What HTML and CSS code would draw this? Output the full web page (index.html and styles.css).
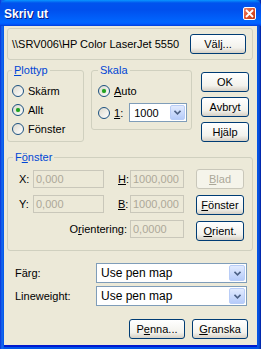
FILE: index.html
```html
<!DOCTYPE html>
<html lang="sv">
<head>
    <meta charset="UTF-8">
    <title>Skriv ut</title>
    <link rel="stylesheet" href="styles.css">
</head>
<body>

<div class="window">
    <div class="titlebar">
        <span class="title">Skriv ut</span>
        <span class="close">
            <svg width="9" height="9" viewBox="0 0 9 9"><path d="M1 1L8 8M8 1L1 8" stroke="#fff" stroke-width="1.8"/></svg>
        </span>
    </div>

    <div class="client">
        <div class="printer-box">
            <span>\\SRV006\HP Color LaserJet 5550</span>
            <div class="btn btn-wide">Väl<u>j</u>...</div>
        </div>

        <div class="row-top">
            <fieldset class="plottyp">
                <legend><u>P</u>lottyp</legend>
                <div class="radio"><span class="dot"></span>Skärm</div>
                <div class="radio"><span class="dot on"></span>Allt</div>
                <div class="radio"><span class="dot"></span>Fönster</div>
            </fieldset>

            <fieldset class="skala">
                <legend>Skala</legend>
                <div class="radio"><span class="dot on"></span><u>A</u>uto</div>
                <div class="radio scale-row">
                    <span class="dot"></span><u>1</u>:
                    <div class="combo combo-small"><span>1000</span><span class="arrow"><svg width="7" height="5" viewBox="0 0 7 5"><path d="M0.5 0.8L3.5 3.8L6.5 0.8" stroke="#4d6185" stroke-width="1.6" fill="none"/></svg></span></div>
                </div>
            </fieldset>

            <div class="side-buttons">
                <div class="btn">OK</div>
                <div class="btn">Avbryt</div>
                <div class="btn">Hjälp</div>
            </div>
        </div>

        <fieldset class="fonster">
            <legend>F<u>ö</u>nster</legend>
            <div class="win-grid">
                <div class="coords">
                    <div class="coord-row">
                        <span class="lbl-x">X:</span>
                        <span class="field field-x">0,000</span>
                        <span class="lbl-h"><u>H</u>:</span>
                        <span class="field field-h">1000,000</span>
                    </div>
                    <div class="coord-row">
                        <span class="lbl-x">Y:</span>
                        <span class="field field-x">0,000</span>
                        <span class="lbl-h"><u>B</u>:</span>
                        <span class="field field-h">1000,000</span>
                    </div>
                    <div class="coord-row orient-row">
                        <span>O<u>r</u>ientering:</span>
                        <span class="field field-h">0,0000</span>
                    </div>
                </div>
                <div class="win-buttons">
                    <div class="btn disabled"><u>B</u>lad</div>
                    <div class="btn"><u>F</u>önster</div>
                    <div class="btn"><u>O</u>rient.</div>
                </div>
            </div>
        </fieldset>

        <div class="pen-row pen-first">
            <span class="pen-label">Färg:</span>
            <div class="combo combo-wide"><span>Use pen map</span><span class="arrow"><svg width="7" height="5" viewBox="0 0 7 5"><path d="M0.5 0.8L3.5 3.8L6.5 0.8" stroke="#4d6185" stroke-width="1.6" fill="none"/></svg></span></div>
        </div>
        <div class="pen-row">
            <span class="pen-label">Lineweight:</span>
            <div class="combo combo-wide"><span>Use pen map</span><span class="arrow"><svg width="7" height="5" viewBox="0 0 7 5"><path d="M0.5 0.8L3.5 3.8L6.5 0.8" stroke="#4d6185" stroke-width="1.6" fill="none"/></svg></span></div>
        </div>

        <div class="bottom-buttons">
            <div class="btn btn-wide">P<u>e</u>nna...</div>
            <div class="btn btn-wide"><u>G</u>ranska</div>
        </div>
    </div>
</div>

</body>
</html>
```

FILE: styles.css
```css
body {
    margin: 0;
    padding: 0;
    background-color: #3a6ea5;
    font-family: "Liberation Sans", Arial, sans-serif;
    font-size: 11px;
    color: #000;
}
u {
    text-decoration-thickness: 1px;
    text-underline-offset: 1px;
}
.window {
    width: 261px;
    height: 349px;
    box-sizing: border-box;
    display: flex;
    flex-direction: column;
    background: linear-gradient(to right, #0831d9 0, #166aee 2px, #0055ea 4px, #0055ea 257px, #0a4fd8 259px, #001ea0 261px);
    padding: 0 4px 4px 4px;
}
.titlebar {
    height: 26px;
    margin: 0 -4px;
    padding: 0 5px 0 4px;
    display: flex;
    align-items: center;
    justify-content: space-between;
    background: linear-gradient(to bottom, #0997ff 0, #0053ee 3px, #0050ee 10px, #0066ff 22px, #005bff 24px, #003dd7 26px);
    border-radius: 6px 6px 0 0;
}
.title {
    color: #fff;
    font-weight: bold;
    font-size: 12px;
    text-shadow: 1px 1px #0a1883;
    padding-top: 1px;
}
.close {
    width: 13px;
    height: 13px;
    box-sizing: border-box;
    border: 1px solid #fff;
    border-radius: 2px;
    background: linear-gradient(to bottom right, #e8826b, #e0522c 50%, #c13a15);
    display: flex;
    align-items: center;
    justify-content: center;
    margin-top: 1px;
}
.client {
    flex: 1;
    background-color: #ece9d8;
    padding: 2px 4px 0 3px;
    display: flex;
    flex-direction: column;
    box-shadow: 0 2px 0 #0019cf;
}
.printer-box {
    height: 32px;
    box-sizing: border-box;
    border: 1px solid #d0d0bf;
    border-radius: 3px;
    display: flex;
    align-items: center;
    justify-content: space-between;
    padding: 0 6px 0 4px;
}
.btn {
    width: 48px;
    height: 20px;
    box-sizing: border-box;
    border: 1px solid #003c74;
    border-radius: 3px;
    background: linear-gradient(to bottom, #ffffff, #f3f2ec 70%, #d6d0c5);
    display: flex;
    align-items: center;
    justify-content: center;
}
.btn-wide {
    width: 56px;
}
.btn.disabled {
    border-color: #c9c7ba;
    background: #f5f4ea;
    color: #aca899;
}
.row-top {
    display: flex;
    align-items: flex-start;
    margin-top: 4px;
}
fieldset {
    margin: 0;
    border: 1px solid #d0d0bf;
    border-radius: 3px;
    box-sizing: border-box;
    padding: 0 4px 0 4px;
}
legend {
    color: #0046d5;
    padding: 0 2px;
    line-height: 13px;
}
.plottyp {
    width: 77px;
    height: 78px;
    padding-top: 4px;
}
.skala {
    width: 98px;
    height: 66px;
    margin-left: 7px;
    padding-top: 4px;
    padding-left: 6px;
}
.radio {
    display: flex;
    align-items: center;
    height: 19px;
}
.dot {
    width: 12px;
    height: 12px;
    box-sizing: border-box;
    border: 1px solid #1c5180;
    border-radius: 50%;
    background: linear-gradient(to bottom right, #dcd9cd, #ffffff);
    margin-right: 4px;
    display: flex;
    align-items: center;
    justify-content: center;
}
.dot.on::after {
    content: "";
    width: 4px;
    height: 4px;
    border-radius: 50%;
    background: #21a121;
    box-shadow: 0 0 1px #5ec55e;
}
.scale-row {
    margin-top: 3px;
}
.combo {
    height: 19px;
    box-sizing: border-box;
    border: 1px solid #7f9db9;
    background: #fff;
    display: flex;
    align-items: center;
    justify-content: space-between;
    padding: 0 1px 0 4px;
}
.combo-small {
    width: 58px;
    margin-left: 6px;
}
.arrow {
    width: 15px;
    height: 15px;
    box-sizing: border-box;
    border: 1px solid #b9cdf7;
    border-radius: 2px;
    background: linear-gradient(to bottom, #e2ebfe, #b6cbf9);
    display: flex;
    align-items: center;
    justify-content: center;
}
.side-buttons {
    margin-left: auto;
    margin-right: 4px;
    margin-top: 8px;
    display: flex;
    flex-direction: column;
    gap: 5px;
}
.fonster {
    margin-top: 9px;
    height: 100px;
    padding: 2px 5px 0 5px;
}
.win-grid {
    display: flex;
    justify-content: space-between;
    padding-top: 3px;
}
.coords {
    display: flex;
    flex-direction: column;
    gap: 7px;
    padding-top: 1px;
}
.coord-row {
    display: flex;
    align-items: center;
    height: 18px;
}
.field {
    height: 18px;
    box-sizing: border-box;
    border: 1px solid #c9c7ba;
    color: #aca899;
    display: flex;
    align-items: center;
    padding-left: 2px;
    overflow: hidden;
}
.lbl-x {
    width: 20px;
    padding-left: 6px;
    box-sizing: border-box;
}
.field-x {
    width: 71px;
}
.lbl-h {
    width: 26px;
    padding-left: 14px;
    box-sizing: border-box;
}
.field-h {
    width: 54px;
}
.orient-row {
    justify-content: flex-end;
}
.orient-row span:first-child {
    margin-right: 3px;
}
.win-buttons {
    display: flex;
    flex-direction: column;
    gap: 6px;
    margin-right: 3px;
}
.pen-row {
    display: flex;
    align-items: center;
    margin-top: 3px;
}
.pen-first {
    margin-top: 12px;
}
.pen-label {
    width: 89px;
    padding-left: 8px;
    box-sizing: border-box;
}
.combo-wide {
    width: 151px;
    height: 20px;
    font-size: 12px;
}
.combo-wide .arrow {
    height: 16px;
    width: 16px;
}
.bottom-buttons {
    display: flex;
    justify-content: flex-end;
    gap: 7px;
    margin-top: 13px;
    margin-right: 5px;
}
```
